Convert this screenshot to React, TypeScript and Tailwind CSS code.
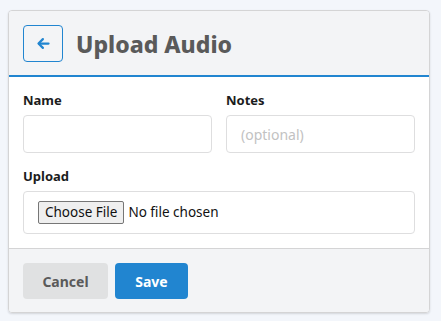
import React from "react";

export default function App() {
  const font = { fontFamily: '"Noto Sans", "Open Sans", Arial, sans-serif' };
  return (
    <div className="min-h-[321px] w-[441px] bg-[#f3f6fb] pt-[10px] pl-[8px]" style={font}>
      <div className="w-[422px] rounded-[4px] border border-[#d4d4d5] shadow-[0_1px_2px_rgba(34,36,38,0.15)] overflow-hidden">
        {/* Header */}
        <div className="flex items-center gap-[13px] bg-[#f3f4f6] px-[14px] pt-[14px] pb-[13px] border-b-2 border-[#2185d0]">
          <button className="flex h-[37px] w-[40px] items-center justify-center rounded-[4px] border border-[#2185d0] bg-transparent">
            <svg width="15" height="15" viewBox="0 0 24 24" fill="none" stroke="#2185d0" strokeWidth="3.6" strokeLinecap="round" strokeLinejoin="round">
              <path d="M20 12H5" />
              <path d="M11 5l-7 7 7 7" />
            </svg>
          </button>
          <h1 className="text-[23px] font-extrabold leading-[28px] text-[#5a5a5a]">Upload Audio</h1>
        </div>
        {/* Body */}
        <div className="bg-white px-[14px] pt-[14px] pb-[14px] border-b border-[#d4d4d5]">
          <div className="grid grid-cols-2 gap-[14px]">
            <div className="flex flex-col">
              <label className="text-[13px] font-bold leading-[18px] text-[#1b1c1d] mb-[6px]">Name</label>
              <input className="h-[38px] w-full rounded-[4px] border border-[#dededf] px-[14px] text-[14px] outline-none" />
            </div>
            <div className="flex flex-col">
              <label className="text-[13px] font-bold leading-[18px] text-[#1b1c1d] mb-[6px]">Notes</label>
              <input placeholder="(optional)" className="h-[38px] w-full rounded-[4px] border border-[#dededf] px-[14px] text-[14px] placeholder:text-[#c2c2c2] outline-none" />
            </div>
          </div>
          <div className="mt-[14px] flex flex-col">
            <label className="text-[13px] font-bold leading-[18px] text-[#1b1c1d] mb-[6px]">Upload</label>
            <div className="flex h-[43px] items-center rounded-[4px] border border-[#dededf] px-[14px]">
              <span className="flex h-[23px] items-center rounded-[2px] border border-[#767676] bg-[#efefef] px-[6px] text-[13.5px] text-[#111]">Choose File</span>
              <span className="ml-[4px] text-[13.5px] text-[#111]">No file chosen</span>
            </div>
          </div>
        </div>
        {/* Footer */}
        <div className="flex gap-[7px] bg-[#f3f4f6] px-[14px] pt-[14px] pb-[13px]">
          <button className="h-[36px] w-[85px] rounded-[4px] bg-[#e0e1e2] text-[14px] font-bold text-[#5a5a5a]">Cancel</button>
          <button className="h-[36px] w-[73px] rounded-[4px] bg-[#2185d0] text-[14px] font-bold text-white">Save</button>
        </div>
      </div>
    </div>
  );
}
